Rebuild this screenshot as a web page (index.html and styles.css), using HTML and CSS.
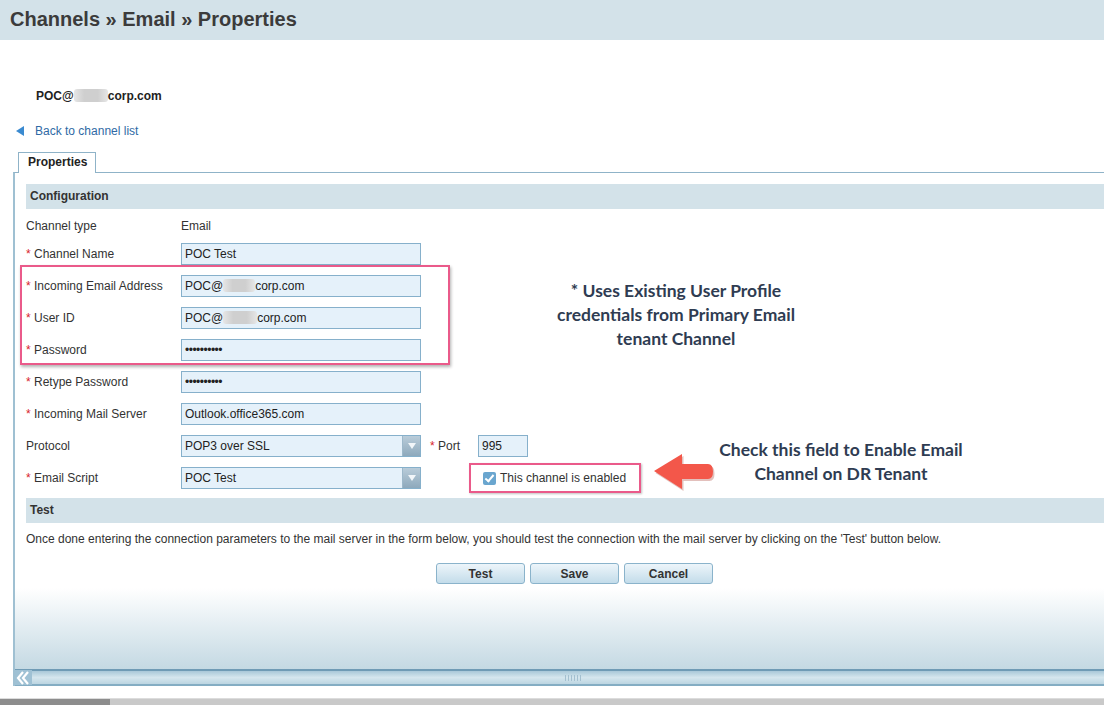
FILE: index.html
```html
<!DOCTYPE html>
<html lang="en">
<head>
    <meta charset="UTF-8">
    <title>Channels » Email » Properties</title>
    <link rel="stylesheet" href="styles.css">
</head>
<body>
    <div class="page-title">Channels » Email » Properties</div>
    <div class="account">POC@<span class="blur"></span>corp.com</div>
    <a class="back" href="#"><span class="back-arrow"></span>Back to channel list</a>
    <div class="tabs"><div class="tab">Properties</div></div>
    <div class="panel">
        <div class="section">Configuration</div>
        <div class="form">
            <div class="row short"><label>Channel type</label><span class="static">Email</span></div>
            <div class="row"><label><i>*</i> Channel Name</label><input class="field" value="POC Test"></div>
            <div class="row"><label><i>*</i> Incoming Email Address</label><div class="field">POC@<span class="blur small"></span>corp.com</div></div>
            <div class="row"><label><i>*</i> User ID</label><div class="field">POC@<span class="blur"></span>corp.com</div></div>
            <div class="row"><label><i>*</i> Password</label><input class="field" type="password" value="abcdefghij"></div>
            <div class="row"><label><i>*</i> Retype Password</label><input class="field" type="password" value="abcdefghij"></div>
            <div class="row"><label><i>*</i> Incoming Mail Server</label><input class="field" value="Outlook.office365.com"></div>
            <div class="row">
                <label>Protocol</label>
                <div class="field select">POP3 over SSL<span class="drop"></span></div>
                <span class="port-label"><i>*</i> Port</span>
                <input class="field port" value="995">
            </div>
            <div class="row">
                <label><i>*</i> Email Script</label>
                <div class="field select">POC Test<span class="drop"></span></div>
                <div class="enabled"><span class="check"></span>This channel is enabled</div>
            </div>
            <div class="highlight"></div>
            <div class="note note-creds">* Uses Existing User Profile<br>credentials from Primary Email<br>tenant Channel</div>
            <div class="note note-check">Check this field to Enable Email<br>Channel on DR Tenant</div>
            <svg class="red-arrow" width="64" height="40" viewBox="0 0 64 40">
                <path d="M2 18 L30 1 L30 11 L56 11 Q61 11 61 18.5 Q61 26 56 26 L30 26 L30 36 Z" fill="#b04a40" opacity="0.35" transform="translate(1.5 2)"/>
                <path d="M2 18 L30 1 L30 11 L56 11 Q61 11 61 18.5 Q61 26 56 26 L30 26 L30 36 Z" fill="#f3574a"/>
            </svg>
        </div>
        <div class="section">Test</div>
        <p class="hint">Once done entering the connection parameters to the mail server in the form below, you should test the connection with the mail server by clicking on the 'Test' button below.</p>
        <div class="buttons">
            <button>Test</button>
            <button>Save</button>
            <button>Cancel</button>
        </div>
        <div class="hscroll">
            <span class="scroll-left">
                <svg width="16" height="16" viewBox="0 0 16 16"><path d="M8 2 L3 8 L8 14 M13 2 L8 8 L13 14" stroke="#fff" stroke-width="2.2" fill="none"/></svg>
            </span>
            <span class="grip"></span>
        </div>
    </div>
    <div class="browser-scroll"><span></span></div>
</body>
</html>
```
FILE: styles.css
```css
* { box-sizing: border-box; }
body {
    margin: 0;
    height: 705px;
    overflow: hidden;
    font-family: 'Liberation Sans', Arial, sans-serif;
    font-size: 12px;
    color: #333;
    background: #fff;
}
.page-title {
    height: 40px;
    line-height: 38px;
    padding-left: 10px;
    background: #d3e2e9;
    font-size: 20px;
    font-weight: bold;
    color: #3b3b3b;
}
.account {
    padding: 49px 0 0 36px;
    line-height: 14px;
    font-weight: bold;
    color: #222;
}
.blur {
    display: inline-block;
    width: 34px;
    height: 13px;
    vertical-align: -2px;
    background: linear-gradient(90deg, #e6e6e6, #cfcfcf 30%, #cfcfcf 70%, #e6e6e6);
    border-radius: 3px;
}
.blur.small { width: 32px; }
.back {
    display: block;
    margin-top: 21px;
    padding-left: 16px;
    line-height: 14px;
    color: #2f6aa5;
    text-decoration: none;
}
.back-arrow {
    display: inline-block;
    width: 0; height: 0;
    border-top: 5px solid transparent;
    border-bottom: 5px solid transparent;
    border-right: 8px solid #3a8ad0;
    margin-right: 11px;
    vertical-align: -1px;
}
.tabs { margin-top: 14px; padding-left: 18px; height: 20px; }
.tab {
    width: 78px;
    height: 21px;
    border: 1px solid #8fb3c8;
    border-bottom: none;
    background: #fff;
    font-weight: bold;
    color: #222;
    line-height: 19px;
    padding-left: 9px;
    position: relative;
    z-index: 1;
}
.panel {
    margin-left: 13px;
    height: 514px;
    border-top: 1px solid #8fb3c8;
    border-left: 2px solid #9fc0d2;
    padding: 11px 0 0 11px;
    background: linear-gradient(#fff 0, #fff 415px, #c4d9e3 496px);
    position: relative;
}
.section {
    height: 25px;
    line-height: 25px;
    background: #d3e2e9;
    font-weight: bold;
    color: #333;
    padding-left: 4px;
}
.form { position: relative; padding: 4px 0 4px 0; }
.row { display: flex; align-items: center; height: 32px; }
.row.short { height: 25px; }
.row:last-of-type { height: 31px; }
.row label { width: 155px; }
.row i { color: #d8232a; font-style: normal; }
.field {
    width: 240px;
    height: 22px;
    border: 1px solid #86b0cb;
    background: #e5f1fa;
    font: 12px 'Liberation Sans', Arial, sans-serif;
    color: #222;
    padding: 0 3px;
    line-height: 20px;
    margin: 0;
}
input.field[type=password] { font-size: 12px; letter-spacing: -0.5px; }
.select { position: relative; }
.drop {
    position: absolute;
    right: 0; top: 0;
    width: 18px; height: 20px;
    background: linear-gradient(#b9ccd9, #8ea9bc);
    border-left: 1px solid #9db8ca;
}
.drop::after {
    content: '';
    position: absolute;
    left: 5px; top: 7px;
    border-left: 4px solid transparent;
    border-right: 4px solid transparent;
    border-top: 6px solid #f2f6f9;
}
.port-label { margin-left: 9px; width: 48px; }
.field.port { width: 50px; }
.enabled {
    margin-left: 48px;
    width: 172px;
    height: 30px;
    border: 2px solid #ea5a8a;
    box-shadow: 1px 1px 2px rgba(0,0,0,0.25);
    display: flex;
    align-items: center;
    padding-left: 12px;
}
.check {
    width: 13px; height: 13px;
    border-radius: 2px;
    background: #6aa6cf;
    margin-right: 4px;
    position: relative;
}
.check::after {
    content: '';
    position: absolute;
    left: 4px; top: 1px;
    width: 3px; height: 7px;
    border: solid #fff;
    border-width: 0 2px 2px 0;
    transform: rotate(40deg);
}
.highlight {
    position: absolute;
    left: -6px; top: 56px;
    width: 430px; height: 100px;
    border: 2px solid #ea5a8a;
    box-shadow: 1px 2px 3px rgba(0,0,0,0.3);
}
.note {
    position: absolute;
    text-align: center;
    font-family: Lato, 'Open Sans', sans-serif;
    font-weight: bold;
    font-size: 17.5px;
    line-height: 24px;
    color: #2f3c52;
}
.note-creds { left: 500px; width: 300px; top: 70px; }
.note-check { left: 665px; width: 300px; top: 229px; }
.red-arrow { position: absolute; left: 626px; top: 244px; }
.hint { margin: 0; padding: 9px 0 0 0; line-height: 14px; }
.buttons {
    display: flex;
    gap: 5px;
    padding-left: 410px;
    margin-top: 17px;
}
.buttons button {
    width: 89px;
    height: 21px;
    border: 1px solid #8ab3cb;
    border-radius: 3px;
    background: linear-gradient(#edf5fa, #c3dcea);
    font: bold 12px 'Liberation Sans', Arial, sans-serif;
    color: #333;
    padding: 0;
}
.hscroll {
    position: absolute;
    left: 0; right: 0; bottom: 0;
    height: 17px;
    border-top: 2px solid #6f9bb5;
    border-bottom: 2px solid #84adc3;
    background: linear-gradient(#a9c8d8, #d5e6ee 50%, #bcd5e1);
}
.scroll-left {
    position: absolute;
    left: 0; top: -1px;
    width: 17px; height: 15px;
    background: #9fc1d4;
}
.scroll-left svg { display: block; }
.grip {
    position: absolute;
    left: 550px; top: 4px;
    width: 16px; height: 6px;
    background: repeating-linear-gradient(90deg, #a4c0d0 0 1px, transparent 1px 3px);
}
.browser-scroll {
    position: absolute;
    left: 0; right: 0; top: 698px;
    height: 7px;
    background: #c9c9c9;
    border-top: 1px solid #dcdcdc;
}
.browser-scroll span {
    display: block;
    width: 110px; height: 100%;
    background: #8d8d8d;
}
```
